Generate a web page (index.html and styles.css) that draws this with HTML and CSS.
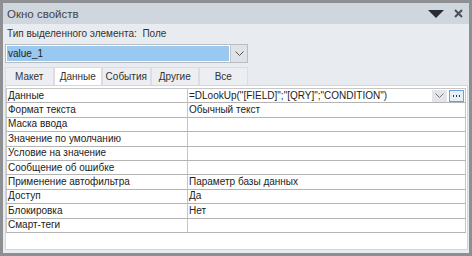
FILE: index.html
```html
<!DOCTYPE html>
<html lang="ru">
<head>
    <meta charset="UTF-8">
    <title>Окно свойств</title>
    <link rel="stylesheet" href="styles.css">
</head>
<body>
    <div class="window">
        <div class="titlebar">
            <span class="title">Окно свойств</span>
            <span class="title-icons">
                <svg width="16" height="8" viewBox="0 0 16 8"><path d="M0 0H16L8 8Z" fill="#2b2b33"/></svg>
                <svg width="9" height="9" viewBox="0 0 9 9"><path d="M1 1L8 8M8 1L1 8" stroke="#4a4f57" stroke-width="2"/></svg>
            </span>
        </div>
        <div class="content">
            <div class="type-label">Тип выделенного элемента:&nbsp; Поле</div>
            <div class="combo">
                <div class="combo-value">value_1</div>
                <div class="combo-btn">
                    <svg width="9" height="5" viewBox="0 0 9 5"><path d="M0.5 0.5L4.5 4.5L8.5 0.5" fill="none" stroke="#555" stroke-width="1"/></svg>
                </div>
            </div>
            <div class="tabs">
                <div class="tab">Макет</div>
                <div class="tab active">Данные</div>
                <div class="tab">События</div>
                <div class="tab">Другие</div>
                <div class="tab">Все</div>
            </div>
            <div class="sheet">
                <table class="props">
                    <tr>
                        <td class="name">Данные</td>
                        <td class="value">
                            <div class="value-edit">
                                <span class="expr">=DLookUp("[FIELD]";"[QRY]";"CONDITION")</span>
                                <span class="cell-btn">
                                    <svg width="9" height="5" viewBox="0 0 9 5"><path d="M0.5 0.5L4.5 4.5L8.5 0.5" fill="none" stroke="#777" stroke-width="1"/></svg>
                                </span>
                                <span class="cell-btn build">
                                    <svg width="7" height="2" viewBox="0 0 7 2"><path d="M0 0h1v2h-1zM3 0h1v2h-1zM6 0h1v2h-1z" fill="#333"/></svg>
                                </span>
                            </div>
                        </td>
                    </tr>
                    <tr><td class="name">Формат текста</td><td class="value">Обычный текст</td></tr>
                    <tr><td class="name">Маска ввода</td><td class="value"></td></tr>
                    <tr><td class="name">Значение по умолчанию</td><td class="value"></td></tr>
                    <tr><td class="name">Условие на значение</td><td class="value"></td></tr>
                    <tr><td class="name">Сообщение об ошибке</td><td class="value"></td></tr>
                    <tr><td class="name">Применение автофильтра</td><td class="value">Параметр базы данных</td></tr>
                    <tr><td class="name">Доступ</td><td class="value">Да</td></tr>
                    <tr><td class="name">Блокировка</td><td class="value">Нет</td></tr>
                    <tr><td class="name">Смарт-теги</td><td class="value"></td></tr>
                </table>
            </div>
        </div>
    </div>
</body>
</html>
```

FILE: styles.css
```css
body {
    margin: 0;
    font-family: 'Liberation Sans', Arial, sans-serif;
    color: #222;
}

.window {
    width: 472px;
    height: 256px;
    box-sizing: border-box;
    border: 3px solid #8d8f93;
    background-color: #e8ebef;
    display: flex;
    flex-direction: column;
}

.titlebar {
    height: 21px;
    flex: none;
    background-color: #d0d6dd;
    display: flex;
    align-items: center;
    justify-content: space-between;
    padding: 0 6px 0 4px;
}

.title {
    font-size: 11.5px;
    color: #444;
}

.title-icons {
    display: flex;
    align-items: center;
    gap: 10px;
}

.content {
    flex: 1;
    display: flex;
    flex-direction: column;
    padding: 0 1px 3px 2px;
}

.type-label {
    font-size: 10px;
    height: 20px;
    line-height: 20px;
    padding-left: 2px;
    color: #333;
}

.combo {
    width: 243px;
    height: 19px;
    box-sizing: border-box;
    border: 1px solid #b9bcc0;
    background-color: white;
    display: flex;
}

.combo-value {
    flex: 1;
    background-color: #99c9f1;
    margin: 1px;
    font-size: 10px;
    line-height: 15px;
    padding-left: 1px;
}

.combo-btn {
    width: 16px;
    background-color: #dfe2e6;
    border-left: 1px solid #c3c6ca;
    display: flex;
    align-items: center;
    justify-content: center;
}

.tabs {
    display: flex;
    margin-top: 4px;
    height: 18px;
}

.tab {
    width: 48.5px;
    box-sizing: border-box;
    background-color: #eceef1;
    border: 1px solid #dadde2;
    border-bottom: none;
    font-size: 10px;
    line-height: 18px;
    text-align: center;
    color: #333;
}

.tab.active {
    background-color: white;
}

.sheet {
    flex: 1;
    background-color: white;
    border: 1px solid #d4d6da;
    padding: 2px 1px 0 0;
}

.props {
    width: 100%;
    border-collapse: collapse;
    table-layout: fixed;
}

.props td {
    height: 14.4px;
    box-sizing: border-box;
    padding: 0 1px;
    border: 1px solid #c6c6c6;
    border-bottom-color: #b4b4b4;
    font-size: 10px;
    line-height: 12px;
    white-space: nowrap;
    overflow: hidden;
}

.props td.name {
    width: 181px;
}

.value-edit {
    display: flex;
    align-items: center;
}

.expr {
    flex: 1;
}

.cell-btn {
    width: 15px;
    height: 12px;
    margin-left: 2px;
    background-color: #e3e5e8;
    display: flex;
    align-items: center;
    justify-content: center;
}

.cell-btn.build {
    box-sizing: border-box;
    border: 1px solid #6d9ed4;
    background-color: #e6eef8;
}
```
